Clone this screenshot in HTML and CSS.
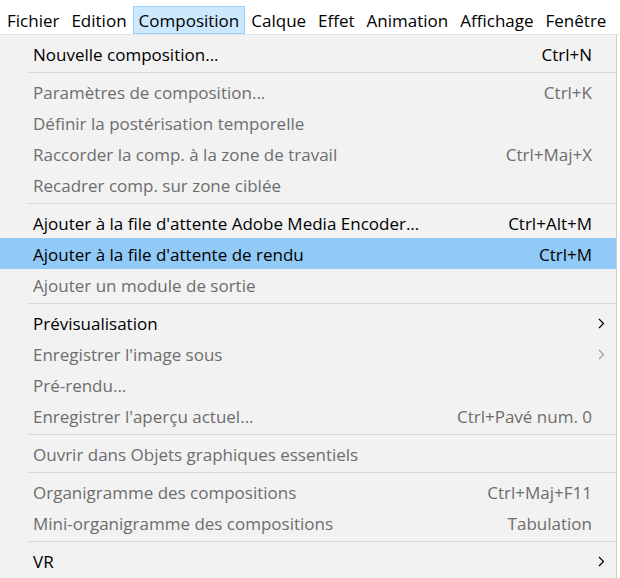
FILE: index.html
```html
<!DOCTYPE html>
<html lang="fr">
<head>
<meta charset="utf-8">
<title>Composition</title>
<link rel="stylesheet" href="styles.css">
</head>
<body>
<div class="menubar">
  <span class="mb-item">Fichier</span>
  <span class="mb-item">Edition</span>
  <span class="mb-item active">Composition</span>
  <span class="mb-item">Calque</span>
  <span class="mb-item">Effet</span>
  <span class="mb-item">Animation</span>
  <span class="mb-item">Affichage</span>
  <span class="mb-item">Fenêtre</span>
</div>
<div class="popup">
  <div class="item"><span class="label">Nouvelle composition...</span><span class="key">Ctrl+N</span></div>
  <div class="sep"></div>
  <div class="item disabled"><span class="label">Paramètres de composition...</span><span class="key">Ctrl+K</span></div>
  <div class="item disabled"><span class="label">Définir la postérisation temporelle</span><span class="key"></span></div>
  <div class="item disabled"><span class="label">Raccorder la comp. à la zone de travail</span><span class="key">Ctrl+Maj+X</span></div>
  <div class="item disabled"><span class="label">Recadrer comp. sur zone ciblée</span><span class="key"></span></div>
  <div class="sep"></div>
  <div class="item"><span class="label">Ajouter à la file d'attente Adobe Media Encoder...</span><span class="key">Ctrl+Alt+M</span></div>
  <div class="item hover"><span class="label">Ajouter à la file d'attente de rendu</span><span class="key">Ctrl+M</span></div>
  <div class="item disabled"><span class="label">Ajouter un module de sortie</span><span class="key"></span></div>
  <div class="sep"></div>
  <div class="item sub"><span class="label">Prévisualisation</span><svg class="arrow" width="7" height="11" viewBox="0 0 7 11"><polyline points="1,1 5.5,5.5 1,10" fill="none" stroke="currentColor" stroke-width="1.2"/></svg></div>
  <div class="item disabled sub"><span class="label">Enregistrer l'image sous</span><svg class="arrow" width="7" height="11" viewBox="0 0 7 11"><polyline points="1,1 5.5,5.5 1,10" fill="none" stroke="currentColor" stroke-width="1.2"/></svg></div>
  <div class="item disabled"><span class="label">Pré-rendu...</span><span class="key"></span></div>
  <div class="item disabled"><span class="label">Enregistrer l'aperçu actuel...</span><span class="key">Ctrl+Pavé num. 0</span></div>
  <div class="sep"></div>
  <div class="item disabled"><span class="label">Ouvrir dans Objets graphiques essentiels</span><span class="key"></span></div>
  <div class="sep"></div>
  <div class="item disabled"><span class="label">Organigramme des compositions</span><span class="key">Ctrl+Maj+F11</span></div>
  <div class="item disabled"><span class="label">Mini-organigramme des compositions</span><span class="key">Tabulation</span></div>
  <div class="sep"></div>
  <div class="item sub"><span class="label">VR</span><svg class="arrow" width="7" height="11" viewBox="0 0 7 11"><polyline points="1,1 5.5,5.5 1,10" fill="none" stroke="currentColor" stroke-width="1.2"/></svg></div>
</div>
</body>
</html>
```
FILE: styles.css
```css
html, body {
  margin: 0;
  padding: 0;
  background: #ffffff;
  font-family: "Open Sans", "Noto Sans", "Liberation Sans", sans-serif;
  font-size: 17px;
  color: #000;
  width: 620px;
  height: 578px;
  overflow: hidden;
}

.menubar {
  display: flex;
  height: 35px;
  padding-top: 6px;
  padding-left: 1px;
  box-sizing: border-box;
  border-bottom: 1px solid #e3e3e3;
  align-items: stretch;
}

.mb-item {
  display: flex;
  align-items: center;
  padding: 1px 5px 0;
  border: 1px solid transparent;
  white-space: nowrap;
}

.mb-item.active {
  background: #cce8ff;
  border-color: #99d1ff;
}

.popup {
  width: 617px;
  background: #f2f2f2;
  border-right: 1px solid #cccccc;
  padding: 3px 0 0;
  height: 543px;
  box-sizing: border-box;
}

.item {
  height: 31px;
  display: flex;
  align-items: center;
  padding: 1px 24px 0 33px;
  box-sizing: border-box;
  white-space: nowrap;
}

.item .label {
  flex: 1;
}

.item.disabled {
  color: #6d6d6d;
}

.item.hover {
  background: #91c9f7;
}

.item.sub {
  padding-right: 11px;
}

.arrow {
  color: #000;
  display: block;
}

.item.disabled .arrow {
  color: #a0a0a0;
}

.sep {
  height: 7px;
  display: flex;
  align-items: center;
  padding-left: 28px;
}

.sep::before {
  content: "";
  flex: 1;
  height: 1px;
  background: #d7d7d7;
}
```
